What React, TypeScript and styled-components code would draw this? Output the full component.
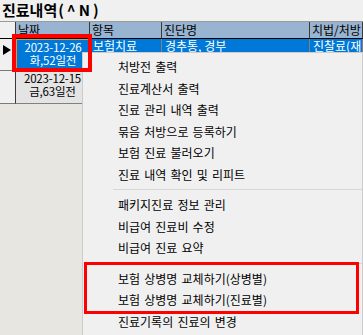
import React from "react";
import styled, { createGlobalStyle } from "styled-components";

const Global = createGlobalStyle`
  html, body { margin: 0; padding: 0; background: #f0f0f0; }
  body { font-family: "Noto Sans CJK KR", "Noto Sans", sans-serif; color: #000; }
`;

const Page = styled.div`
  position: relative;
  width: 363px;
  height: 335px;
  overflow: hidden;
  display: flex;
  flex-direction: column;
  background: #f0f0f0;
`;

const Title = styled.div`
  height: 21px;
  padding-left: 2px;
  font-size: 15px;
  font-weight: 700;
  line-height: 20px;
  white-space: nowrap;
`;

const TitleKey = styled.span`
  letter-spacing: 3px;
  margin-left: 1px;
`;

const GridFrame = styled.div`
  position: relative;
  flex: 1;
  display: flex;
  flex-direction: column;
  border-top: 1px solid #9a9a9a;
  background: #e8e6e0;
`;

const Row = styled.div<{ $h: number }>`
  display: grid;
  grid-template-columns: 16px 74px 72px 148px 1fr;
  height: ${(p) => p.$h}px;
  flex: none;
`;

const HeadCell = styled.div<{ $indicator?: boolean }>`
  background: ${(p) => (p.$indicator ? "#f0f0f0" : "#99b4d1")};
  border-right: 1px solid #3a3a3a;
  border-bottom: 1px solid #000;
  font-size: 12px;
  line-height: 15px;
  padding-left: 2px;
  white-space: nowrap;
  overflow: hidden;
`;

const IndicatorCell = styled.div`
  background: #f0f0f0;
  border-right: 1px solid #3a3a3a;
  border-bottom: 1px solid #7a7a7a;
  display: flex;
  align-items: flex-start;
  padding-top: 6px;
  padding-left: 3px;
`;

const Arrow = styled.span`
  width: 0;
  height: 0;
  border-top: 5px solid transparent;
  border-bottom: 5px solid transparent;
  border-left: 8px solid #000;
`;

const DataCell = styled.div<{ $selected?: boolean; $focus?: boolean }>`
  background: ${(p) => (p.$selected ? "#0078d7" : "#e4e4e4")};
  color: ${(p) => (p.$selected ? "#fff" : "#000")};
  border-right: 1px solid #808080;
  border-bottom: 1px solid #808080;
  border-top: ${(p) => (p.$focus ? "1px solid #e8903a" : "none")};
  border-left: ${(p) => (p.$focus ? "1px solid #e8903a" : "none")};
  font-size: 12px;
  line-height: 14px;
  padding-left: 3px;
  white-space: nowrap;
  overflow: hidden;
`;

const DateCell = styled(DataCell)`
  font-size: 11.5px;
  line-height: 13px;
  letter-spacing: -0.2px;
  padding: 1px 0 0 0;
  text-align: center;
`;

const Menu = styled.div`
  position: absolute;
  left: 82px;
  top: 30px;
  width: 281px;
  bottom: -20px;
  box-sizing: border-box;
  background: #f0f0f0;
  border: 1px solid #cccccc;
  padding-top: 3px;
  display: flex;
  flex-direction: column;
`;

const MenuItem = styled.div`
  height: 21.5px;
  padding-left: 35px;
  font-size: 12px;
  line-height: 21.5px;
  word-spacing: 1.5px;
  white-space: nowrap;
  color: #000;
`;

const Separator = styled.div`
  height: 9px;
  display: flex;
  align-items: center;
  padding-left: 30px;
  &::after {
    content: "";
    flex: 1;
    height: 1px;
    background: #d7d7d7;
  }
`;

const Highlight = styled.div<{ $x: number; $y: number; $w: number; $h: number; $t: number }>`
  position: absolute;
  left: ${(p) => p.$x}px;
  top: ${(p) => p.$y}px;
  width: ${(p) => p.$w}px;
  height: ${(p) => p.$h}px;
  box-sizing: border-box;
  border: ${(p) => p.$t}px solid #ff0000;
  pointer-events: none;
`;

const groups: string[][] = [
  [
    "처방전 출력",
    "진료계산서 출력",
    "진료 관리 내역 출력",
    "묶음 처방으로 등록하기",
    "보험 진료 불러오기",
    "진료 내역 확인 및 리피트",
  ],
  ["패키지진료 정보 관리", "비급여 진료비 수정", "비급여 진료 요약"],
  ["보험 상병명 교체하기(상병별)", "보험 상병명 교체하기(진료별)", "진료기록의 진료의 변경"],
];

export default function App() {
  return (
    <Page>
      <Global />
      <Title>
        진료내역<TitleKey>(^N)</TitleKey>
      </Title>
      <GridFrame>
        <Row $h={17}>
          <HeadCell $indicator />
          <HeadCell>날짜</HeadCell>
          <HeadCell>항목</HeadCell>
          <HeadCell>진단명</HeadCell>
          <HeadCell>치법/처방</HeadCell>
        </Row>
        <Row $h={32}>
          <IndicatorCell>
            <Arrow />
          </IndicatorCell>
          <DateCell $selected $focus>
            2023-12-26
            <br />
            화,52일전
          </DateCell>
          <DataCell $selected>보험치료</DataCell>
          <DataCell $selected>경추통, 경부</DataCell>
          <DataCell $selected>진찰료(재진)</DataCell>
        </Row>
        <Row $h={33}>
          <IndicatorCell />
          <DateCell>
            2023-12-15
            <br />
            금,63일전
          </DateCell>
          <DataCell />
          <DataCell />
          <DataCell />
        </Row>
        <Menu>
          {groups.map((g, gi) => (
            <React.Fragment key={gi}>
              {gi > 0 && <Separator />}
              {g.map((label) => (
                <MenuItem key={label}>{label}</MenuItem>
              ))}
            </React.Fragment>
          ))}
        </Menu>
      </GridFrame>
      <Highlight $x={12} $y={34} $w={80} $h={38} $t={4} />
      <Highlight $x={84} $y={262} $w={275} $h={52} $t={3} />
    </Page>
  );
}
